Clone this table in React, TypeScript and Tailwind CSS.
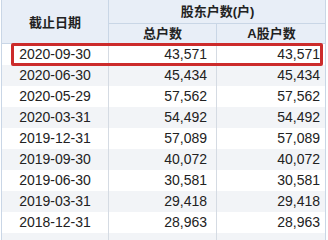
import React from "react";

const rows: [string, string, string][] = [
  ["2020-09-30", "43,571", "43,571"],
  ["2020-06-30", "45,434", "45,434"],
  ["2020-05-29", "57,562", "57,562"],
  ["2020-03-31", "54,492", "54,492"],
  ["2019-12-31", "57,089", "57,089"],
  ["2019-09-30", "40,072", "40,072"],
  ["2019-06-30", "30,581", "30,581"],
  ["2019-03-31", "29,418", "29,418"],
  ["2018-12-31", "28,963", "28,963"],
];

export default function App() {
  return (
    <div
      className="relative w-[328px] h-[240px] overflow-hidden bg-white text-[#222]"
      style={{ fontFamily: '"Liberation Sans", "Noto Sans CJK SC", sans-serif' }}
    >
      <div className="ml-[1px] w-[325px] border-l border-r border-[#c9d6e6]">
        <div className="grid grid-cols-[107px_108px_109px] bg-[#e8eef7] border-b border-[#c9d6e6]">
          <div className="row-span-2 flex items-center justify-center border-r border-[#c9d6e6] text-[13px] font-bold pt-[2px]">
            截止日期
          </div>
          <div className="col-span-2 h-[24px] flex items-center justify-center border-b border-[#c9d6e6] text-[13px] font-bold">
            股东户数(户)
          </div>
          <div className="h-[19px] flex items-center justify-center border-r border-[#c9d6e6] text-[13px] font-bold">
            总户数
          </div>
          <div className="h-[19px] flex items-center justify-center text-[13px] font-bold">
            A股户数
          </div>
        </div>
        {rows.map((r, i) => (
          <div
            key={r[0]}
            className={`grid grid-cols-[107px_108px_109px] h-[21px] text-[14px] ${
              i % 2 === 1 ? "bg-[#f2f4f7]" : "bg-white"
            }`}
          >
            <div className="flex items-center justify-center border-r border-[#d5dbe3]">{r[0]}</div>
            <div className="flex items-center justify-end pr-[9px] border-r border-[#d5dbe3]">{r[1]}</div>
            <div className="flex items-center justify-end pr-[6px]">{r[2]}</div>
          </div>
        ))}
        <div className="grid grid-cols-[107px_108px_109px] h-[10px] bg-[#f2f4f7]">
          <div className="border-r border-[#d5dbe3]" />
          <div className="border-r border-[#d5dbe3]" />
          <div />
        </div>
      </div>
      <div className="absolute left-[11px] top-[43px] w-[312px] h-[23px] border-[3px] border-[#cc2b2b] rounded-[2px]" />
    </div>
  );
}
